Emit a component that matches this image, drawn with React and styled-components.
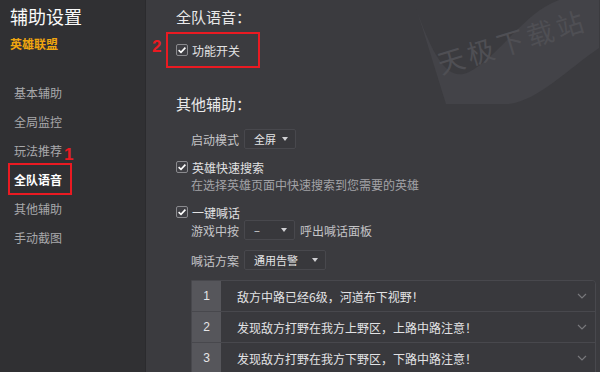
import React from 'react';
import styled, { createGlobalStyle } from 'styled-components';

const GlobalStyle = createGlobalStyle`
  html, body {
    margin: 0;
    padding: 0;
    background: #3b3b3f;
  }
  body {
    font-family: "Noto Sans CJK SC", "Noto Sans", sans-serif;
  }
`;

const navItems = ['基本辅助', '全局监控', '玩法推荐', '全队语音', '其他辅助', '手动截图'];

const phrases = [
  '敌方中路已经6级，河道布下视野！',
  '发现敌方打野在我方上野区，上路中路注意！',
  '发现敌方打野在我方下野区，下路中路注意！',
];

const Check = ({ children, marked }) => (
  <CheckRow>
    <Box>
      <svg width="10" height="10" viewBox="0 0 10 10">
        <path d="M1.6 5.2 L4 7.4 L8.4 2.6" fill="none" stroke="#fff" strokeWidth="1.6" />
      </svg>
    </Box>
    <span>{children}</span>
    {marked && (
      <>
        <MarkBox $left={-10} $top={-9} $w={94} $h={36} />
        <MarkNum $left={-24} $top={-4}>2</MarkNum>
      </>
    )}
  </CheckRow>
);

const Select = ({ value, width }) => (
  <SelectBox $w={width}>
    <span>{value}</span>
    <Caret />
  </SelectBox>
);

const App = () => {
  return (
    <>
      <GlobalStyle />
      <Page>
        <Sidebar>
          <Title>辅助设置</Title>
          <Game>英雄联盟</Game>
          <Nav>
            {navItems.map((item) => (
              <NavItem key={item} $active={item === '全队语音'}>
                {item}
                {item === '全队语音' && (
                  <>
                    <MarkBox $left={-2} $top={-2} $w={64} $h={32} />
                    <MarkNum $left={54} $top={-20}>1</MarkNum>
                  </>
                )}
              </NavItem>
            ))}
          </Nav>
        </Sidebar>

        <Main>
          <Watermark>
            <svg width="183" height="110" viewBox="0 0 183 110">
              <path
                d="M0 8 C18 60 33 82 53 72 C83 57 108 12 143 0 L183 0 L183 48 C153 68 123 100 93 104 L30 104 C18 66 8 32 0 8 Z"
                fill="#434348"
              />
            </svg>
            <WatermarkText>天极下载站</WatermarkText>
          </Watermark>

          <SectionTitle>全队语音：</SectionTitle>
          <Group $mt={13}>
            <Check marked>功能开关</Check>
          </Group>

          <SectionTitle $mt={34}>其他辅助：</SectionTitle>
          <Indented $mt={14}>
            <FieldRow>
              <Label>启动模式</Label>
              <Select value="全屏" width={52} />
            </FieldRow>
          </Indented>

          <Group $mt={9}>
            <Check>英雄快速搜索</Check>
          </Group>
          <Indented>
            <Desc>在选择英雄页面中快速搜索到您需要的英雄</Desc>
          </Indented>

          <Group $mt={9}>
            <Check>一键喊话</Check>
          </Group>
          <Indented $mt={-1}>
            <FieldRow>
              <Label>游戏中按</Label>
              <Select value="–" width={51} />
              <Label>呼出喊话面板</Label>
            </FieldRow>
          </Indented>
          <Indented $mt={10}>
            <FieldRow>
              <Label>喊话方案</Label>
              <Select value="通用告警" width={82} />
            </FieldRow>
          </Indented>

          <Indented $mt={10}>
            <Table>
              {phrases.map((text, i) => (
                <Row key={i}>
                  <NumCell>{i + 1}</NumCell>
                  <TextCell>
                    <span>{text}</span>
                    <svg width="10" height="6" viewBox="0 0 10 6">
                      <path d="M1 1 L5 5 L9 1" fill="none" stroke="#77777b" strokeWidth="1.2" />
                    </svg>
                  </TextCell>
                </Row>
              ))}
            </Table>
          </Indented>
        </Main>
      </Page>
    </>
  );
};

const Page = styled.div`
  display: flex;
  width: 600px;
  height: 372px;
  overflow: hidden;
  background: #3b3b3f;
`;

const Sidebar = styled.aside`
  width: 146px;
  flex-shrink: 0;
  background: #303033;
  border-right: 1px solid #2b2b2e;
  padding: 4px 0 0 10px;
  box-sizing: border-box;
`;

const Title = styled.div`
  font-size: 18px;
  line-height: 24px;
  color: #fafafa;
`;

const Game = styled.div`
  margin-top: 7px;
  font-size: 12px;
  line-height: 18px;
  font-weight: bold;
  color: #f0a60f;
`;

const Nav = styled.nav`
  margin-top: 25px;
  display: flex;
  flex-direction: column;
`;

const NavItem = styled.div`
  position: relative;
  height: 29px;
  line-height: 29px;
  padding-left: 4px;
  font-size: 12px;
  color: ${(p) => (p.$active ? '#ffffff' : '#a8a8ab')};
  font-weight: ${(p) => (p.$active ? 'bold' : 'normal')};
`;

const MarkBox = styled.span`
  position: absolute;
  left: ${(p) => p.$left}px;
  top: ${(p) => p.$top}px;
  width: ${(p) => p.$w}px;
  height: ${(p) => p.$h}px;
  border: 2px solid #ea1a22;
  box-sizing: border-box;
`;

const MarkNum = styled.span`
  position: absolute;
  left: ${(p) => p.$left}px;
  top: ${(p) => p.$top}px;
  font-family: "Liberation Sans", Arial, sans-serif;
  font-size: 17px;
  line-height: 20px;
  font-weight: bold;
  color: #ea1a22;
`;

const Main = styled.main`
  position: relative;
  flex: 1;
  padding: 6px 0 0 30px;
  display: flex;
  flex-direction: column;
`;

const Watermark = styled.div`
  position: absolute;
  left: 270px;
  top: 0;
  pointer-events: none;
`;

const WatermarkText = styled.div`
  position: absolute;
  left: 22px;
  top: 46px;
  font-size: 27px;
  line-height: 36px;
  letter-spacing: 4px;
  color: #4f4f54;
  white-space: nowrap;
  transform: rotate(-17deg);
  transform-origin: left center;
`;

const SectionTitle = styled.div`
  position: relative;
  margin-top: ${(p) => p.$mt || 0}px;
  font-size: 15px;
  line-height: 22px;
  color: #e9e9ea;
`;

const Group = styled.div`
  position: relative;
  margin-top: ${(p) => p.$mt || 0}px;
`;

const Indented = styled.div`
  position: relative;
  margin-top: ${(p) => p.$mt || 0}px;
  padding-left: 15px;
`;

const CheckRow = styled.div`
  position: relative;
  display: flex;
  align-items: center;
  gap: 4px;
  height: 18px;
  font-size: 12px;
  color: #e2e2e3;
`;

const Box = styled.span`
  display: flex;
  align-items: center;
  justify-content: center;
  width: 12px;
  height: 12px;
  border: 1px solid #8a8a8e;
  border-radius: 2px;
  background: #3f3f44;
  box-sizing: border-box;
`;

const FieldRow = styled.div`
  display: flex;
  align-items: center;
  gap: 5px;
  height: 20px;
`;

const Label = styled.span`
  font-size: 12px;
  color: #c4c4c7;
`;

const Desc = styled.div`
  font-size: 12px;
  line-height: 18px;
  color: #a3a3a7;
`;

const SelectBox = styled.div`
  display: flex;
  align-items: center;
  justify-content: space-between;
  width: ${(p) => p.$w}px;
  height: 20px;
  padding: 0 7px 0 9px;
  box-sizing: border-box;
  border: 1px solid #48484d;
  border-radius: 2px;
  background: #38383c;
  font-size: 11px;
  color: #e4e4e6;
`;

const Caret = styled.span`
  width: 0;
  height: 0;
  border-left: 3.5px solid transparent;
  border-right: 3.5px solid transparent;
  border-top: 4px solid #d0d0d3;
`;

const Table = styled.div`
  width: 403px;
  border: 1px solid #48484d;
  border-radius: 0 4px 0 0;
  display: flex;
  flex-direction: column;
  overflow: hidden;
`;

const Row = styled.div`
  display: flex;
  height: 30px;
  & + & {
    border-top: 1px solid #48484d;
  }
`;

const NumCell = styled.div`
  width: 29px;
  flex-shrink: 0;
  display: flex;
  align-items: center;
  justify-content: center;
  background: #56565b;
  font-family: "Liberation Sans", Arial, sans-serif;
  font-size: 12px;
  color: #e6e6e8;
`;

const TextCell = styled.div`
  flex: 1;
  display: flex;
  align-items: center;
  justify-content: space-between;
  padding: 0 8px 0 16px;
  background: #39393d;
  font-size: 12px;
  color: #e2e2e4;
`;

export default App;
